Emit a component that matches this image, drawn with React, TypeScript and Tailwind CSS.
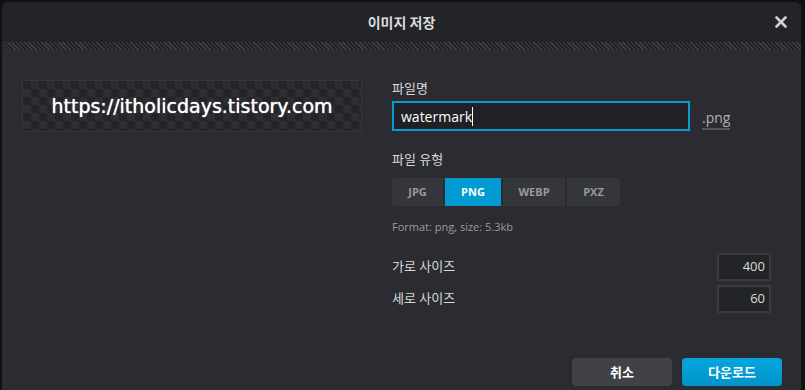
import React from 'react'

const formats = [
  { name: 'JPG', w: 'w-[51px]' },
  { name: 'PNG', w: 'w-[56px]' },
  { name: 'WEBP', w: 'w-[62px]' },
  { name: 'PXZ', w: 'w-[53px]' }
]

export default function App() {
  return (
    <div className="w-[805px] h-[390px] bg-[#101114] pt-[2px] pl-[2px] overflow-hidden font-['Open_Sans','Noto_Sans_CJK_KR',sans-serif]">
      <div className="w-[799px] h-[388px] flex flex-col bg-[#2a2c31] rounded-t-[6px] overflow-hidden">
        {/* header */}
        <div className="relative h-[40px] bg-[#222428] flex items-center justify-center">
          <span className="text-[14px] font-bold text-[#dcdcdc] font-['Noto_Sans_CJK_KR',sans-serif]">
            이미지 저장
          </span>
          <svg
            className="absolute right-[14px] top-[14px]"
            width="12"
            height="12"
            viewBox="0 0 12 12"
          >
            <path d="M1.5 1.5 L10.5 10.5 M10.5 1.5 L1.5 10.5" stroke="#d0d0d0" strokeWidth="2.6" strokeLinecap="round" />
          </svg>
        </div>
        <div className="h-[8px] bg-[#222428] bg-[repeating-linear-gradient(45deg,#3e4146_0px,#3e4146_1px,transparent_1px,transparent_3px)]" />

        {/* body */}
        <div className="flex-1 flex">
          <div className="w-[390px] pl-[20px] pt-[30px]">
            <div className="w-[340px] h-[52px] border border-[#35373b] bg-[conic-gradient(#2d2e32_25%,#232427_0_50%,#2d2e32_0_75%,#232427_0)] bg-[length:16px_16px] flex items-center justify-center">
              <span className="text-[19px] text-white font-['DejaVu_Sans',sans-serif] [text-shadow:0_0_1px_#ffffff]">
                https://itholicdays.tistory.com
              </span>
            </div>
          </div>

          <div className="w-[379px] pt-[29px] flex flex-col">
            <div className="text-[13px] leading-[18px] text-[#d8d8d8]">파일명</div>
            <div className="mt-[4px] flex items-center gap-[12px]">
              <div className="w-[298px] h-[30px] border-2 border-[#0a9ad0] bg-[#1f2125] flex items-center pl-[7px]">
                <span className="text-[14px] text-white">watermark</span>
                <span className="w-px h-[19px] bg-white" />
              </div>
              <span className="text-[14px] text-[#b0b0b0] border-b-2 border-[#55575c] leading-[20px] pt-[6px]">.png</span>
            </div>

            <div className="mt-[19px] text-[13px] leading-[18px] text-[#d8d8d8]">파일 유형</div>
            <div className="mt-[10px] flex gap-[2px]">
              {formats.map((f, i) => (
                <div
                  key={f.name}
                  className={
                    'h-[28px] flex items-center justify-center text-[11px] font-bold ' +
                    f.w +
                    (f.name === 'PNG' ? ' bg-[#009bd2] text-white' : ' bg-[#34363b] text-[#9a9a9a]') +
                    (i === 0 ? ' rounded-l-[3px]' : '') +
                    (i === formats.length - 1 ? ' rounded-r-[3px]' : '')
                  }
                >
                  {f.name}
                </div>
              ))}
            </div>
            <div className="mt-[13px] text-[11px] leading-[16px] text-[#9a9a9a]">Format: png, size: 5.3kb</div>

            <div className="mt-[18px] flex flex-col gap-[4px]">
              {[
                ['가로 사이즈', '400'],
                ['세로 사이즈', '60']
              ].map(([label, val]) => (
                <div key={label} className="flex items-center justify-between">
                  <span className="text-[13px] text-[#d8d8d8]">{label}</span>
                  <div className="w-[54px] h-[28px] border-2 border-[#393b40] bg-[#222428] flex items-center justify-end pr-[4px]">
                    <span className="text-[13px] text-[#dcdcdc]">{val}</span>
                  </div>
                </div>
              ))}
            </div>
          </div>
        </div>

        {/* footer */}
        <div className="flex justify-end gap-[10px] pr-[19px] pb-[4px]">
          <button className="w-[100px] h-[28px] rounded-[4px] bg-[#404247] text-[13px] font-bold text-white font-['Noto_Sans_CJK_KR',sans-serif]">
            취소
          </button>
          <button className="w-[100px] h-[28px] rounded-[4px] bg-gradient-to-b from-[#05a6dd] to-[#0094cb] text-[13px] font-bold text-white font-['Noto_Sans_CJK_KR',sans-serif]">
            다운로드
          </button>
        </div>
      </div>
    </div>
  )
}
